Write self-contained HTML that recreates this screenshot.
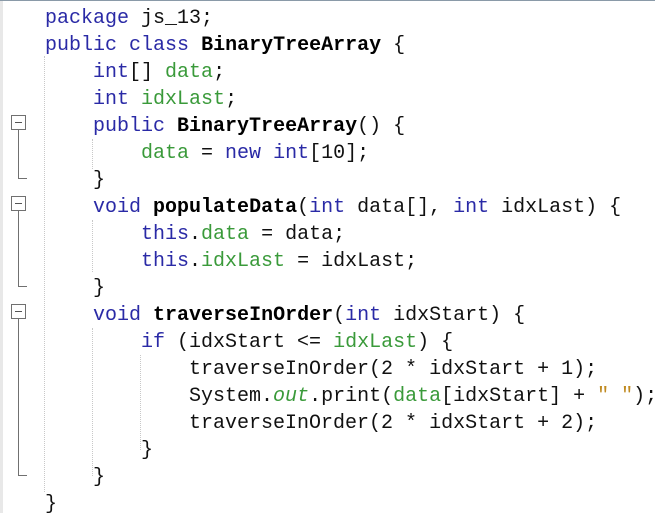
<!DOCTYPE html>
<html><head><meta charset="utf-8"><style>
html,body{margin:0;padding:0;background:#fff;width:655px;height:513px;overflow:hidden;position:relative}
.top{position:absolute;left:0;top:0;width:655px;height:1px;background:#8a9aa8}
.strip{position:absolute;left:0;top:1px;width:3px;height:512px;background:#e8e8e8}
pre{position:absolute;left:45px;top:5px;margin:0;font-family:"Liberation Mono",monospace;font-size:20px;line-height:27px;color:#111}
.k{color:#2a2aa6}.g{color:#3a9a3a}.s{color:#c08a20}b{font-weight:bold;color:#000}i{color:#3a9a3a}
.v{position:absolute;border-left:1px dotted #c8c8c8;width:0}
.box{position:absolute;left:11px;width:13px;height:13px;border:1px solid #707070;background:#fff}
.box:after{content:"";position:absolute;left:3px;top:6px;width:7px;height:1px;background:#555}
.fl{position:absolute;left:18px;width:8px;border-left:1px solid #707070;border-bottom:1px solid #707070}
</style></head><body>
<div class="top"></div><div class="strip"></div>
<div class="v" style="left:44px;top:56px;height:436px"></div>
<div class="v" style="left:92px;top:139px;height:30px"></div>
<div class="v" style="left:92px;top:220px;height:52px"></div>
<div class="v" style="left:92px;top:328px;height:148px"></div>
<div class="v" style="left:140px;top:355px;height:95px"></div>
<div class="box" style="top:115px"></div><div class="fl" style="top:130px;height:48px"></div>
<div class="box" style="top:196px"></div><div class="fl" style="top:211px;height:75px"></div>
<div class="box" style="top:304px"></div><div class="fl" style="top:319px;height:156px"></div>
<pre><span class="k">package</span> js_13;
<span class="k">public</span> <span class="k">class</span> <b>BinaryTreeArray</b> {
    <span class="k">int</span>[] <span class="g">data</span>;
    <span class="k">int</span> <span class="g">idxLast</span>;
    <span class="k">public</span> <b>BinaryTreeArray</b>() {
        <span class="g">data</span> = <span class="k">new</span> <span class="k">int</span>[10];
    }
    <span class="k">void</span> <b>populateData</b>(<span class="k">int</span> data[], <span class="k">int</span> idxLast) {
        <span class="k">this</span>.<span class="g">data</span> = data;
        <span class="k">this</span>.<span class="g">idxLast</span> = idxLast;
    }
    <span class="k">void</span> <b>traverseInOrder</b>(<span class="k">int</span> idxStart) {
        <span class="k">if</span> (idxStart &lt;= <span class="g">idxLast</span>) {
            traverseInOrder(2 * idxStart + 1);
            System.<i>out</i>.print(<span class="g">data</span>[idxStart] + <span class="s">" "</span>);
            traverseInOrder(2 * idxStart + 2);
        }
    }
}</pre>
</body></html>
